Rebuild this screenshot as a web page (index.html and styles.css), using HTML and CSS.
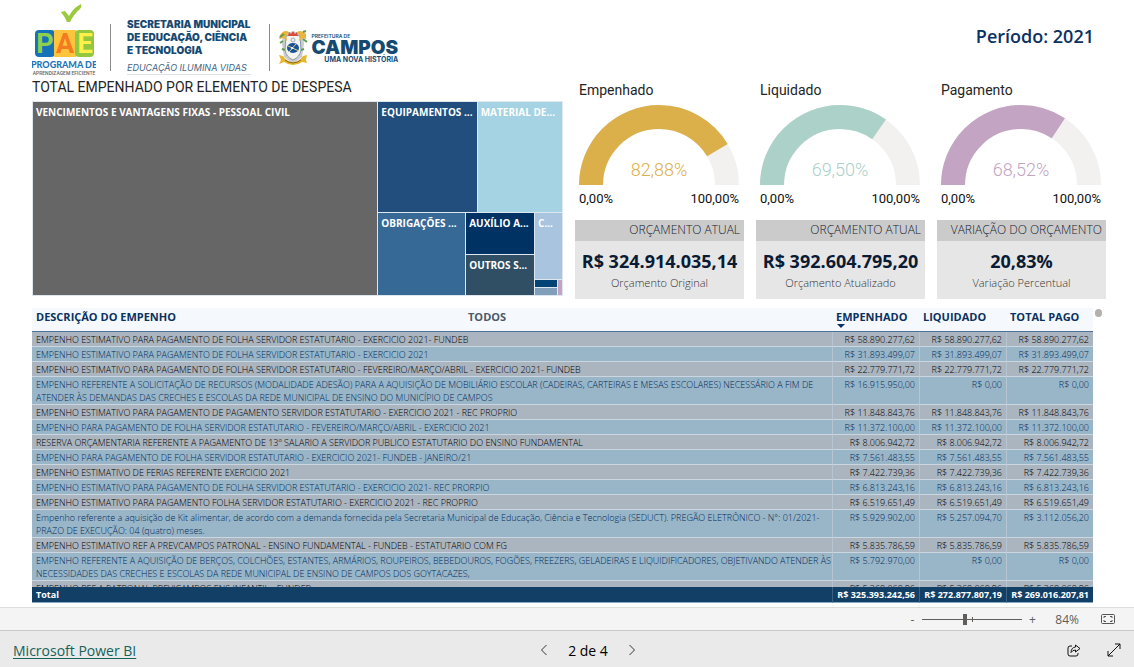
FILE: index.html
```html
<!DOCTYPE html>
<html lang="pt-BR">
<head>
<meta charset="utf-8">
<title>Programa de Aprendizagem Eficiente</title>
<meta name="viewport" content="width=device-width, initial-scale=1">
<link rel="stylesheet" href="styles.css">
</head>
<body>
<main class="report">
  <header class="header">
    <svg class="logo-pae" width="64" height="76" viewBox="0 0 64 76" role="img" aria-label="PAE">
      <path d="M29 11l4-1 4 5Q42 6 49 3q1 3-1 5-6 5-10 13h-3Q33 16 29 11z" fill="#9bca3e"/>
      <rect x="3" y="29" width="20" height="27" rx="4" fill="#1572b8"/>
      <rect x="22" y="29" width="22" height="27" fill="#fdc43d"/>
      <rect x="43" y="29" width="19" height="27" rx="4" fill="#93c83e"/>
      <g class="pae-letters" text-anchor="middle">
        <text x="13" y="52" fill="#8ed04b">P</text>
        <text x="33" y="52" fill="#f47b20">A</text>
        <text x="53" y="52" fill="#fff04a">E</text>
      </g>
      <text class="pae-name" x="32" y="67" text-anchor="middle">PROGRAMA DE</text>
      <text class="pae-sub" x="32" y="74" text-anchor="middle">APRENDIZAGEM EFICIENTE</text>
    </svg>
    <div class="secretaria">
      <strong>SECRETARIA MUNICIPAL<br>DE EDUCAÇÃO, CIÊNCIA<br>E TECNOLOGIA</strong>
      <em>EDUCAÇÃO ILUMINA VIDAS</em>
    </div>
    <div class="campos">
      <svg width="30" height="40" viewBox="0 0 30 40" aria-hidden="true">
        <path d="M5 7Q14 2 25 7l1 10-2 13-9 7-9-7-2-13z" fill="#c9cdd1"/>
        <path d="M8 9q7-3 14 0l1 14q-1 7-8 10-7-3-8-10z" fill="#f3f4f2" stroke="#8d9aa5"/>
        <path d="M2 8q4-6 9-3l-3 4 1 5-3-3-5 1z" fill="#e9b53a"/>
        <path d="M28 7q-5-5-9-2l3 4-1 5 4-3 3 1z" fill="#e9b53a"/>
        <path d="M2 10l4-3M5 14l-3 2M25 5l3-1M25 12l4 3M4 22l3 1M26 22l-3 1" stroke="#5d9b4d" stroke-width="2"/>
        <path d="M10 9l1-4 2 2 2-3 2 3 2-2 1 4z" fill="#d94b3d"/>
        <circle cx="15" cy="13" r="2" fill="#eee" stroke="#a4a9ab"/>
        <ellipse cx="15" cy="21" rx="6" ry="5" fill="#17529a"/>
        <path d="M10 19l11 5M11 25l7-8" stroke="#e7d27a" stroke-width="1"/>
        <circle cx="14" cy="21" r="1" fill="#fff"/>
        <path d="M1 28l4 1q4 6 10 6t10-6l4-1-1 5 1 3-5-1q-4 3-9 3t-9-3l-5 2 2-4z" fill="#e6b72f"/>
        <path d="M7 33q8 6 16 0" fill="none" stroke="#8b6a23"/>
      </svg>
      <div class="campos-text">
        <small>PREFEITURA DE</small>
        <strong>CAMPOS</strong>
        <span>UMA NOVA HISTÓRIA</span>
      </div>
    </div>
    <h1 class="period">Período: 2021</h1>
  </header>

  <div class="top">
    <section class="tree-panel">
      <h2 class="tree-title">TOTAL EMPENHADO POR ELEMENTO DE DESPESA</h2>
      <div class="treemap">
        <div class="tile t-main">VENCIMENTOS E VANTAGENS FIXAS - PESSOAL CIVIL</div>
        <div class="tree-side">
          <div class="tree-upper">
            <div class="tile t-equip">EQUIPAMENTOS ...</div>
            <div class="tile t-mat">MATERIAL DE...</div>
          </div>
          <div class="tree-lower">
            <div class="tile t-obr">OBRIGAÇÕES ...</div>
            <div class="tree-stack">
              <div class="tile t-aux">AUXÍLIO A...</div>
              <div class="tile t-out">OUTROS S...</div>
            </div>
            <div class="tree-rest">
              <div class="tile t-c">C...</div>
              <div class="tree-mini">
                <div class="mini m-navy"></div>
                <div class="mini m-pink"></div>
                <div class="mini m-steel"></div>
              </div>
            </div>
          </div>
        </div>
      </div>
    </section>

    <section class="indicators">
      <div class="column">
        <div class="gauge gold">
          <h3>Empenhado</h3>
          <svg viewBox="0 0 160 80" aria-hidden="true">
            <path class="track" d="M12 80a68 68 0 0 1 136 0"/>
            <path class="fill" pathLength="100" stroke-dasharray="82.88 100" d="M12 80a68 68 0 0 1 136 0"/>
          </svg>
          <output>82,88%</output>
          <div class="scale"><span>0,00%</span><span>100,00%</span></div>
        </div>
        <div class="card">
          <h3>ORÇAMENTO ATUAL</h3>
          <strong>R$ 324.914.035,14</strong>
          <span>Orçamento Original</span>
        </div>
      </div>
      <div class="column">
        <div class="gauge green">
          <h3>Liquidado</h3>
          <svg viewBox="0 0 160 80" aria-hidden="true">
            <path class="track" d="M12 80a68 68 0 0 1 136 0"/>
            <path class="fill" pathLength="100" stroke-dasharray="69.5 100" d="M12 80a68 68 0 0 1 136 0"/>
          </svg>
          <output>69,50%</output>
          <div class="scale"><span>0,00%</span><span>100,00%</span></div>
        </div>
        <div class="card">
          <h3>ORÇAMENTO ATUAL</h3>
          <strong>R$ 392.604.795,20</strong>
          <span>Orçamento Atualizado</span>
        </div>
      </div>
      <div class="column">
        <div class="gauge mauve">
          <h3>Pagamento</h3>
          <svg viewBox="0 0 160 80" aria-hidden="true">
            <path class="track" d="M12 80a68 68 0 0 1 136 0"/>
            <path class="fill" pathLength="100" stroke-dasharray="68.52 100" d="M12 80a68 68 0 0 1 136 0"/>
          </svg>
          <output>68,52%</output>
          <div class="scale"><span>0,00%</span><span>100,00%</span></div>
        </div>
        <div class="card">
          <h3>VARIAÇÃO DO ORÇAMENTO</h3>
          <strong>20,83%</strong>
          <span>Variação Percentual</span>
        </div>
      </div>
    </section>
  </div>

  <section class="details">
    <div class="table-wrap">
      <table>
        <thead>
          <tr>
            <th scope="col"><div class="first-head"><span>DESCRIÇÃO DO EMPENHO</span><span class="all">TODOS</span></div></th>
            <th scope="col" class="num sorted">EMPENHADO</th>
            <th scope="col" class="num">LIQUIDADO</th>
            <th scope="col" class="num">TOTAL PAGO</th>
          </tr>
        </thead>
        <tbody>
          <tr><td>EMPENHO ESTIMATIVO PARA PAGAMENTO DE FOLHA SERVIDOR ESTATUTARIO - EXERCICIO 2021- FUNDEB</td><td>R$ 58.890.277,62</td><td>R$ 58.890.277,62</td><td>R$ 58.890.277,62</td></tr>
          <tr><td>EMPENHO ESTIMATIVO PARA PAGAMENTO DE FOLHA SERVIDOR ESTATUTARIO - EXERCICIO 2021</td><td>R$ 31.893.499,07</td><td>R$ 31.893.499,07</td><td>R$ 31.893.499,07</td></tr>
          <tr><td>EMPENHO ESTIMATIVO PARA PAGAMENTO DE FOLHA SERVIDOR ESTATUTARIO - FEVEREIRO/MARÇO/ABRIL - EXERCICIO 2021- FUNDEB</td><td>R$ 22.779.771,72</td><td>R$ 22.779.771,72</td><td>R$ 22.779.771,72</td></tr>
          <tr><td>EMPENHO REFERENTE A SOLICITAÇÃO DE RECURSOS (MODALIDADE ADESÃO) PARA A AQUISIÇÃO DE MOBILIÁRIO ESCOLAR (CADEIRAS, CARTEIRAS E MESAS ESCOLARES) NECESSÁRIO A FIM DE<br>ATENDER ÀS DEMANDAS DAS CRECHES E ESCOLAS DA REDE MUNICIPAL DE ENSINO DO MUNICÍPIO DE CAMPOS</td><td>R$ 16.915.950,00</td><td>R$ 0,00</td><td>R$ 0,00</td></tr>
          <tr><td>EMPENHO ESTIMATIVO PARA PAGAMENTO DE PAGAMENTO SERVIDOR ESTATUTARIO - EXERCICIO 2021 - REC PROPRIO</td><td>R$ 11.848.843,76</td><td>R$ 11.848.843,76</td><td>R$ 11.848.843,76</td></tr>
          <tr><td>EMPENHO PARA PAGAMENTO DE FOLHA SERVIDOR ESTATUTARIO - FEVEREIRO/MARÇO/ABRIL - EXERCICIO 2021</td><td>R$ 11.372.100,00</td><td>R$ 11.372.100,00</td><td>R$ 11.372.100,00</td></tr>
          <tr><td>RESERVA ORÇAMENTARIA REFERENTE A PAGAMENTO DE 13º SALARIO A SERVIDOR PUBLICO ESTATUTARIO DO ENSINO FUNDAMENTAL</td><td>R$ 8.006.942,72</td><td>R$ 8.006.942,72</td><td>R$ 8.006.942,72</td></tr>
          <tr><td>EMPENHO PARA PAGAMENTO DE FOLHA SERVIDOR ESTATUTARIO - EXERCICIO 2021- FUNDEB - JANEIRO/21</td><td>R$ 7.561.483,55</td><td>R$ 7.561.483,55</td><td>R$ 7.561.483,55</td></tr>
          <tr><td>EMPENHO ESTIMATIVO DE FERIAS REFERENTE EXERCICIO 2021</td><td>R$ 7.422.739,36</td><td>R$ 7.422.739,36</td><td>R$ 7.422.739,36</td></tr>
          <tr><td>EMPENHO ESTIMATIVO PARA PAGAMENTO DE FOLHA SERVIDOR ESTATUTARIO - EXERCICIO 2021- REC PRORPIO</td><td>R$ 6.813.243,16</td><td>R$ 6.813.243,16</td><td>R$ 6.813.243,16</td></tr>
          <tr><td>EMPENHO ESTIMATIVO PARA PAGAMENTO FOLHA SERVIDOR ESTATUTARIO - EXERCICIO 2021 - REC PROPRIO</td><td>R$ 6.519.651,49</td><td>R$ 6.519.651,49</td><td>R$ 6.519.651,49</td></tr>
          <tr><td>Empenho referente a aquisição de Kit alimentar, de acordo com a demanda fornecida pela Secretaria Municipal de Educação, Ciência e Tecnologia (SEDUCT). PREGÃO ELETRÔNICO - N°: 01/2021-<br>PRAZO DE EXECUÇÃO: 04 (quatro) meses.</td><td>R$ 5.929.902,00</td><td>R$ 5.257.094,70</td><td>R$ 3.112.056,20</td></tr>
          <tr><td>EMPENHO ESTIMATIVO REF A PREVCAMPOS PATRONAL - ENSINO FUNDAMENTAL - FUNDEB - ESTATUTARIO COM FG</td><td>R$ 5.835.786,59</td><td>R$ 5.835.786,59</td><td>R$ 5.835.786,59</td></tr>
          <tr><td>EMPENHO REFERENTE A AQUISIÇÃO DE BERÇOS, COLCHÕES, ESTANTES, ARMÁRIOS, ROUPEIROS, BEBEDOUROS, FOGÕES, FREEZERS, GELADEIRAS E LIQUIDIFICADORES, OBJETIVANDO ATENDER ÀS<br>NECESSIDADES DAS CRECHES E ESCOLAS DA REDE MUNICIPAL DE ENSINO DE CAMPOS DOS GOYTACAZES,</td><td>R$ 5.792.970,00</td><td>R$ 0,00</td><td>R$ 0,00</td></tr>
          <tr><td>EMPENHO REF A PATRONAL PREVICAMPOS ENS INFANTIL - FUNDEB</td><td>R$ 5.368.068,96</td><td>R$ 5.368.068,96</td><td>R$ 5.368.068,96</td></tr>
        </tbody>
        <tfoot>
          <tr><th scope="row">Total</th><td>R$ 325.393.242,56</td><td>R$ 272.877.807,19</td><td>R$ 269.016.207,81</td></tr>
        </tfoot>
      </table>
    </div>
    <div class="scroll-dot"></div>
  </section>
</main>

<div class="zoombar">
  <button type="button" aria-label="Reduzir">-</button>
  <div class="slider"><input type="range" min="0" max="100" value="42" aria-label="Zoom"></div>
  <button type="button" aria-label="Ampliar">+</button>
  <span class="zoom-value">84%</span>
  <button type="button" aria-label="Ajustar à página">
    <svg width="14" height="10" viewBox="0 0 14 10" fill="none" stroke="#555"><rect x=".5" y=".5" width="13" height="9" rx="1"/><path d="M3 4V2.500H5M9 2.500h2V4M3 6v1.500H5M9 7.500h2V6"/></svg>
  </button>
</div>

<footer class="pagebar">
  <a href="#">Microsoft Power BI</a>
  <nav class="pager" aria-label="Páginas">
    <button type="button" aria-label="Anterior"><svg width="8" height="12" viewBox="0 0 8 12" fill="none" stroke="#333"><path d="M6.500 1l-5 5 5 5"/></svg></button>
    <span>2 de 4</span>
    <button type="button" aria-label="Próxima"><svg width="8" height="12" viewBox="0 0 8 12" fill="none" stroke="#333"><path d="M1.500 1l5 5-5 5"/></svg></button>
  </nav>
  <div class="actions">
    <button type="button" aria-label="Compartilhar"><svg width="14" height="13" viewBox="0 0 14 13" fill="none" stroke="#111" stroke-linejoin="round"><path d="M5 2H3Q1 2 1 4v6q0 2 2 2h6q2 0 2-2V9"/><path d="M8.500 1l4.500 3.500L8.500 8V6Q5.500 6 4 8.500 4.200 3.500 8.500 3z"/></svg></button>
    <button type="button" aria-label="Tela cheia"><svg width="14" height="14" viewBox="0 0 14 14" fill="none" stroke="#111"><path d="M1 13L13 1M8 1h5v5M1 8v5h5"/></svg></button>
  </div>
</footer>
</body>
</html>
```
FILE: styles.css
```css
* { box-sizing: border-box; }

body {
  margin: 0;
  height: 100vh;
  display: flex;
  flex-direction: column;
  font-family: "Open Sans", "Noto Sans", sans-serif;
  color: #252423;
  background: #fff;
}

h1, h2, h3 { margin: 0; font-weight: 400; }

button {
  padding: 0;
  border: 0;
  background: none;
  font: inherit;
  color: inherit;
  display: flex;
  align-items: center;
  justify-content: center;
}

.report {
  flex: 1;
  min-height: 0;
  display: flex;
  flex-direction: column;
  padding: 0 28px 4px 32px;
}

/* Header */
.header { display: flex; align-items: flex-start; height: 78px; padding-top: 1px; flex: none; }
.logo-pae { flex: none; }
.pae-letters { font: 700 27px Roboto, sans-serif; }
.pae-name { font: 900 9px Lato, sans-serif; fill: #1b75bb; }
.pae-sub { font: 500 5px Roboto, sans-serif; fill: #666; }

.secretaria {
  margin: 23px 0 0 14px;
  padding: 0 18px 0 16px;
  height: 47px;
  border-left: 1px solid #8b8b8b;
  border-right: 1px solid #8b8b8b;
  font-family: Inter, sans-serif;
  font-size: 10px;
  line-height: 13px;
  color: #174a73;
  white-space: nowrap;
}
.secretaria strong { display: block; margin-top: -6px; font-weight: 900; }
.secretaria em { display: block; margin-top: 4px; font-size: 9px; color: #3f6687; border-bottom: 1px solid #dbe2e8; }

.campos { display: flex; gap: 4px; padding: 26px 0 0 8px; }
.campos-text { display: flex; flex-direction: column; align-items: flex-end; padding-top: 6px; font-family: Inter, sans-serif; color: #174a73; white-space: nowrap; }
.campos-text small { align-self: flex-start; font-size: 5px; line-height: 7px; font-weight: 600; }
.campos-text strong { font-size: 19px; line-height: 15px; font-weight: 900; }
.campos-text span { font-size: 7px; line-height: 10px; font-weight: 700; }

.period { margin: 23px 12px 0 auto; font-size: 18px; line-height: 25px; font-weight: 600; color: #0b3161; }

/* Treemap and indicators */
.top { display: grid; grid-template-columns: 1fr 1fr; gap: 12px; flex: none; }

.tree-panel { display: flex; flex-direction: column; }
.tree-title { font-family: Roboto, sans-serif; font-size: 14px; line-height: 18px; white-space: nowrap; }
.treemap { display: grid; grid-template-columns: 345fr 184fr; gap: 1px; height: 195px; margin-top: 5px; padding: 1px; background: #dfe7ee; }
.tree-side { display: grid; grid-template-rows: 110fr 82fr; gap: 1px; min-width: 0; }
.tree-upper { display: grid; grid-template-columns: 98fr 84fr; gap: 1px; }
.tree-lower { display: grid; grid-template-columns: 87fr 68fr 27fr; gap: 1px; }
.tree-stack { display: grid; grid-template-rows: 41fr 40fr; gap: 1px; }
.tree-rest { display: grid; grid-template-rows: 66fr 15fr; gap: 1px; }
.tree-mini { display: grid; grid-template-columns: 22fr 4fr; grid-template-rows: 1fr 1fr; gap: 1px; }
.tile { min-width: 0; overflow: hidden; padding: 3px 0 0 3px; font-size: 10px; line-height: 14px; font-weight: 700; color: #fff; white-space: nowrap; }
.t-main { background: #666; }
.t-equip { background: #214e7d; }
.t-mat { background: #a5d3e3; }
.t-obr { background: #366996; }
.t-aux { background: #003264; }
.t-out { background: #304f65; }
.t-c { background: #a8c4df; }
.m-navy { background: #034376; }
.m-pink { background: #c2a3c1; grid-row: span 2; }
.m-steel { background: #819fbb; }

.indicators { display: grid; grid-template-columns: repeat(3, 1fr); gap: 12px; padding-top: 3px; }
.gauge { display: flex; flex-direction: column; padding: 0 5px 0 4px; font-family: Roboto, sans-serif; }
.gauge h3 { font-size: 14px; line-height: 18px; }
.gauge svg { display: block; width: 100%; margin-top: 6px; }
.gauge path { fill: none; stroke-width: 24; }
.track { stroke: #f2f1f0; }
.gauge output { margin-top: -26px; text-align: center; font-size: 18px; line-height: 22px; font-weight: 300; }
.scale { display: flex; justify-content: space-between; margin-top: 10px; font-size: 13px; line-height: 16px; color: #111; }
.gold .fill { stroke: #dbb04a; }
.gold output { color: #dbb04a; }
.green .fill { stroke: #acd1c9; }
.green output { color: #acd1c9; }
.mauve .fill { stroke: #c3a4c3; }
.mauve output { color: #c3a4c3; }

.card { margin-top: 13px; height: 79px; display: flex; flex-direction: column; align-items: center; background: #e6e6e6; white-space: nowrap; }
.card h3 { align-self: stretch; padding-right: 4px; text-align: right; font-size: 12px; line-height: 19px; padding-bottom: 2px; font-weight: 300; color: #17212e; background: #cbcbcb; }
.card strong { margin-top: 8px; font-size: 18px; line-height: 24px; color: #0b1b33; }
.card span { font-size: 11px; line-height: 20px; font-weight: 300; color: #333; }

/* Expense table */
.details { flex: 1; min-height: 0; display: flex; gap: 2px; margin-top: 9px; }
.table-wrap { flex: 1; min-width: 0; overflow: hidden; }
table { width: 100%; table-layout: fixed; border-spacing: 0; font-size: 9px; line-height: 13px; }
th, td { padding: 1px 4px 0; text-align: left; vertical-align: top; white-space: nowrap; }
thead th { position: sticky; top: 0; height: 24px; padding-top: 0; background: #f5f9fd; border-bottom: 1px solid #4b719b; font-size: 11px; line-height: 18px; font-weight: 700; color: #0b3161; }
th.num { width: 87px; }
th.sorted::after { content: ""; position: absolute; left: 5px; top: 16px; border: 4px solid transparent; border-top-color: #0b3161; border-bottom: 0; }
.first-head { display: grid; grid-template-columns: 432fr 360fr; }
.all { color: #4b5968; }
tbody td { background: #aab5c0; border-bottom: 1px solid #cbd6e0; color: #000; font-weight: 300; }
tbody tr:nth-child(even) td { background: #99b5c8; color: #002b58; }
tbody td + td { text-align: right; border-left: 1px solid #b6c5d1; }
tfoot th, tfoot td { position: sticky; bottom: 0; height: 16px; background: #113f66; border-bottom: 1px solid #8aa7c0; color: #fff; font-weight: 700; }
tfoot td { padding-left: 0; text-align: right; border-left: 1px solid #3c6283; }
.scroll-dot { width: 7px; height: 8px; margin: 1px 4px 0 0; border-radius: 4px; background: #b3b0ad; }

/* Zoom bar */
.zoombar { flex: none; height: 23px; display: flex; align-items: center; justify-content: flex-end; padding-right: 19px; background: #f4f4f4; border-top: 1px solid #dedede; font-size: 12px; color: #605e5c; }
.zoombar button { min-width: 14px; }
.slider { position: relative; display: flex; width: 100px; margin: 0 3px; }
.slider::after { content: ""; position: absolute; left: 50%; top: 5px; width: 1px; height: 5px; background: #605e5c; }
.slider input { appearance: none; width: 100%; height: 15px; margin: 0; background: linear-gradient(#605e5c, #605e5c) center / 100% 1px no-repeat; }
.slider input::-webkit-slider-thumb { appearance: none; width: 4px; height: 11px; background: #605e5c; }
.zoom-value { margin: 0 22px 0 16px; }

/* Page bar */
.pagebar { flex: none; height: 37px; display: grid; grid-template-columns: 1fr auto 1fr; align-items: center; padding: 2px 13px 0; background: #eaeaea; border-top: 1px solid #c8c8c8; font-size: 14px; }
.pagebar a { color: #13635a; font-size: 14px; text-underline-offset: 2px; }
.pager { display: flex; align-items: center; margin-left: 42px; gap: 20px; color: #000; }
.actions { display: flex; justify-content: flex-end; gap: 26px; }
```
